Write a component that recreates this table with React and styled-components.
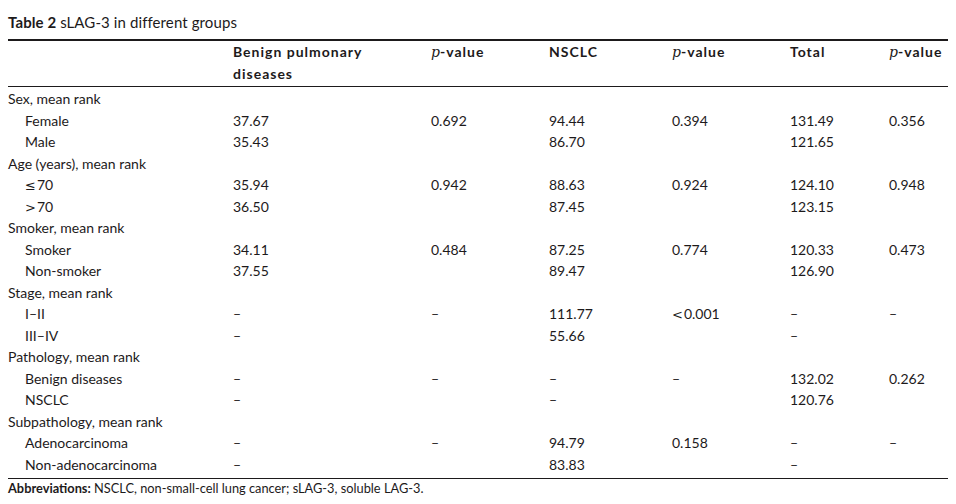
import React from 'react';
import styled, { createGlobalStyle } from 'styled-components';

const GlobalStyle = createGlobalStyle`
  body {
    margin: 0;
    background: #ffffff;
    font-family: Lato, "Open Sans", sans-serif;
    color: #1d1a1b;
  }
`;

const COLS = '225px 198px 118px 123px 118px 99px 1fr';

const Page = styled.div`
  width: 940px;
  padding: 0 8px;
`;

const Title = styled.h1`
  margin: 11.5px 0 7.5px;
  font-size: 15px;
  line-height: 20px;
  font-weight: 400;
  letter-spacing: 0.1px;
  b {
    font-weight: 700;
  }
`;

const Table = styled.div`
  border-top: 2px solid #1d1a1b;
  border-bottom: 1px solid #1d1a1b;
`;

const Head = styled.div`
  display: grid;
  grid-template-columns: ${COLS};
  padding-bottom: 2px;
  border-bottom: 1px solid #1d1a1b;
  font-size: 14px;
  font-weight: 700;
  letter-spacing: 1px;
  line-height: 21.5px;
`;

const Body = styled.div`
  padding: 1px 0 3px;
`;

const Row = styled.div`
  display: grid;
  grid-template-columns: ${COLS};
  font-size: 14px;
  line-height: 21.5px;
  height: 21.5px;
  white-space: nowrap;
`;

const Label = styled.div`
  padding-left: ${(p) => (p.$sub ? '17px' : '0')};
`;

const Cell = styled.div``;

const P = styled.i`
  font-family: "DejaVu Serif", serif;
  font-weight: 400;
  letter-spacing: 0;
`;

const Sym = styled.span`
  font-family: "DejaVu Sans", sans-serif;
  font-size: 13px;
  line-height: 0;
  margin-right: 1px;
`;

const Note = styled.p`
  margin: 1px 0 0;
  font-size: 12.8px;
  line-height: 16px;
  b {
    font-weight: 700;
  }
`;

const PV = () => (
  <Cell>
    <P>p</P>-value
  </Cell>
);

const rows = [
  { label: 'Sex, mean rank' },
  { label: 'Female', sub: true, v: ['37.67', '0.692', '94.44', '0.394', '131.49', '0.356'] },
  { label: 'Male', sub: true, v: ['35.43', '', '86.70', '', '121.65', ''] },
  { label: 'Age (years), mean rank' },
  { label: <><Sym>{'\u2264'}</Sym>70</>, sub: true, v: ['35.94', '0.942', '88.63', '0.924', '124.10', '0.948'] },
  { label: <><Sym>{'>'}</Sym>70</>, sub: true, v: ['36.50', '', '87.45', '', '123.15', ''] },
  { label: 'Smoker, mean rank' },
  { label: 'Smoker', sub: true, v: ['34.11', '0.484', '87.25', '0.774', '120.33', '0.473'] },
  { label: 'Non-smoker', sub: true, v: ['37.55', '', '89.47', '', '126.90', ''] },
  { label: 'Stage, mean rank' },
  { label: 'I\u2013II', sub: true, v: ['\u2013', '\u2013', '111.77', <><Sym>{'<'}</Sym>0.001</>, '\u2013', '\u2013'] },
  { label: 'III\u2013IV', sub: true, v: ['\u2013', '', '55.66', '', '\u2013', ''] },
  { label: 'Pathology, mean rank' },
  { label: 'Benign diseases', sub: true, v: ['\u2013', '\u2013', '\u2013', '\u2013', '132.02', '0.262'] },
  { label: 'NSCLC', sub: true, v: ['\u2013', '', '\u2013', '', '120.76', ''] },
  { label: 'Subpathology, mean rank' },
  { label: 'Adenocarcinoma', sub: true, v: ['\u2013', '\u2013', '94.79', '0.158', '\u2013', '\u2013'] },
  { label: 'Non-adenocarcinoma', sub: true, v: ['\u2013', '', '83.83', '', '\u2013', ''] },
];

export default function App() {
  return (
    <Page>
      <GlobalStyle />
      <Title>
        <b>Table 2</b> sLAG-3 in different groups
      </Title>
      <Table>
        <Head>
          <Cell />
          <Cell>
            Benign pulmonary
            <br />
            diseases
          </Cell>
          <PV />
          <Cell>NSCLC</Cell>
          <PV />
          <Cell>Total</Cell>
          <PV />
          <Cell />
        </Head>
        <Body>
          {rows.map((r, i) => (
            <Row key={i}>
              <Label $sub={r.sub}>{r.label}</Label>
              {(r.v || ['', '', '', '', '', '']).map((v, j) => (
                <Cell key={j}>{v}</Cell>
              ))}
              <Cell />
            </Row>
          ))}
        </Body>
      </Table>
      <Note>
        <b>Abbreviations:</b> NSCLC, non-small-cell lung cancer; sLAG-3, soluble LAG-3.
      </Note>
    </Page>
  );
}
